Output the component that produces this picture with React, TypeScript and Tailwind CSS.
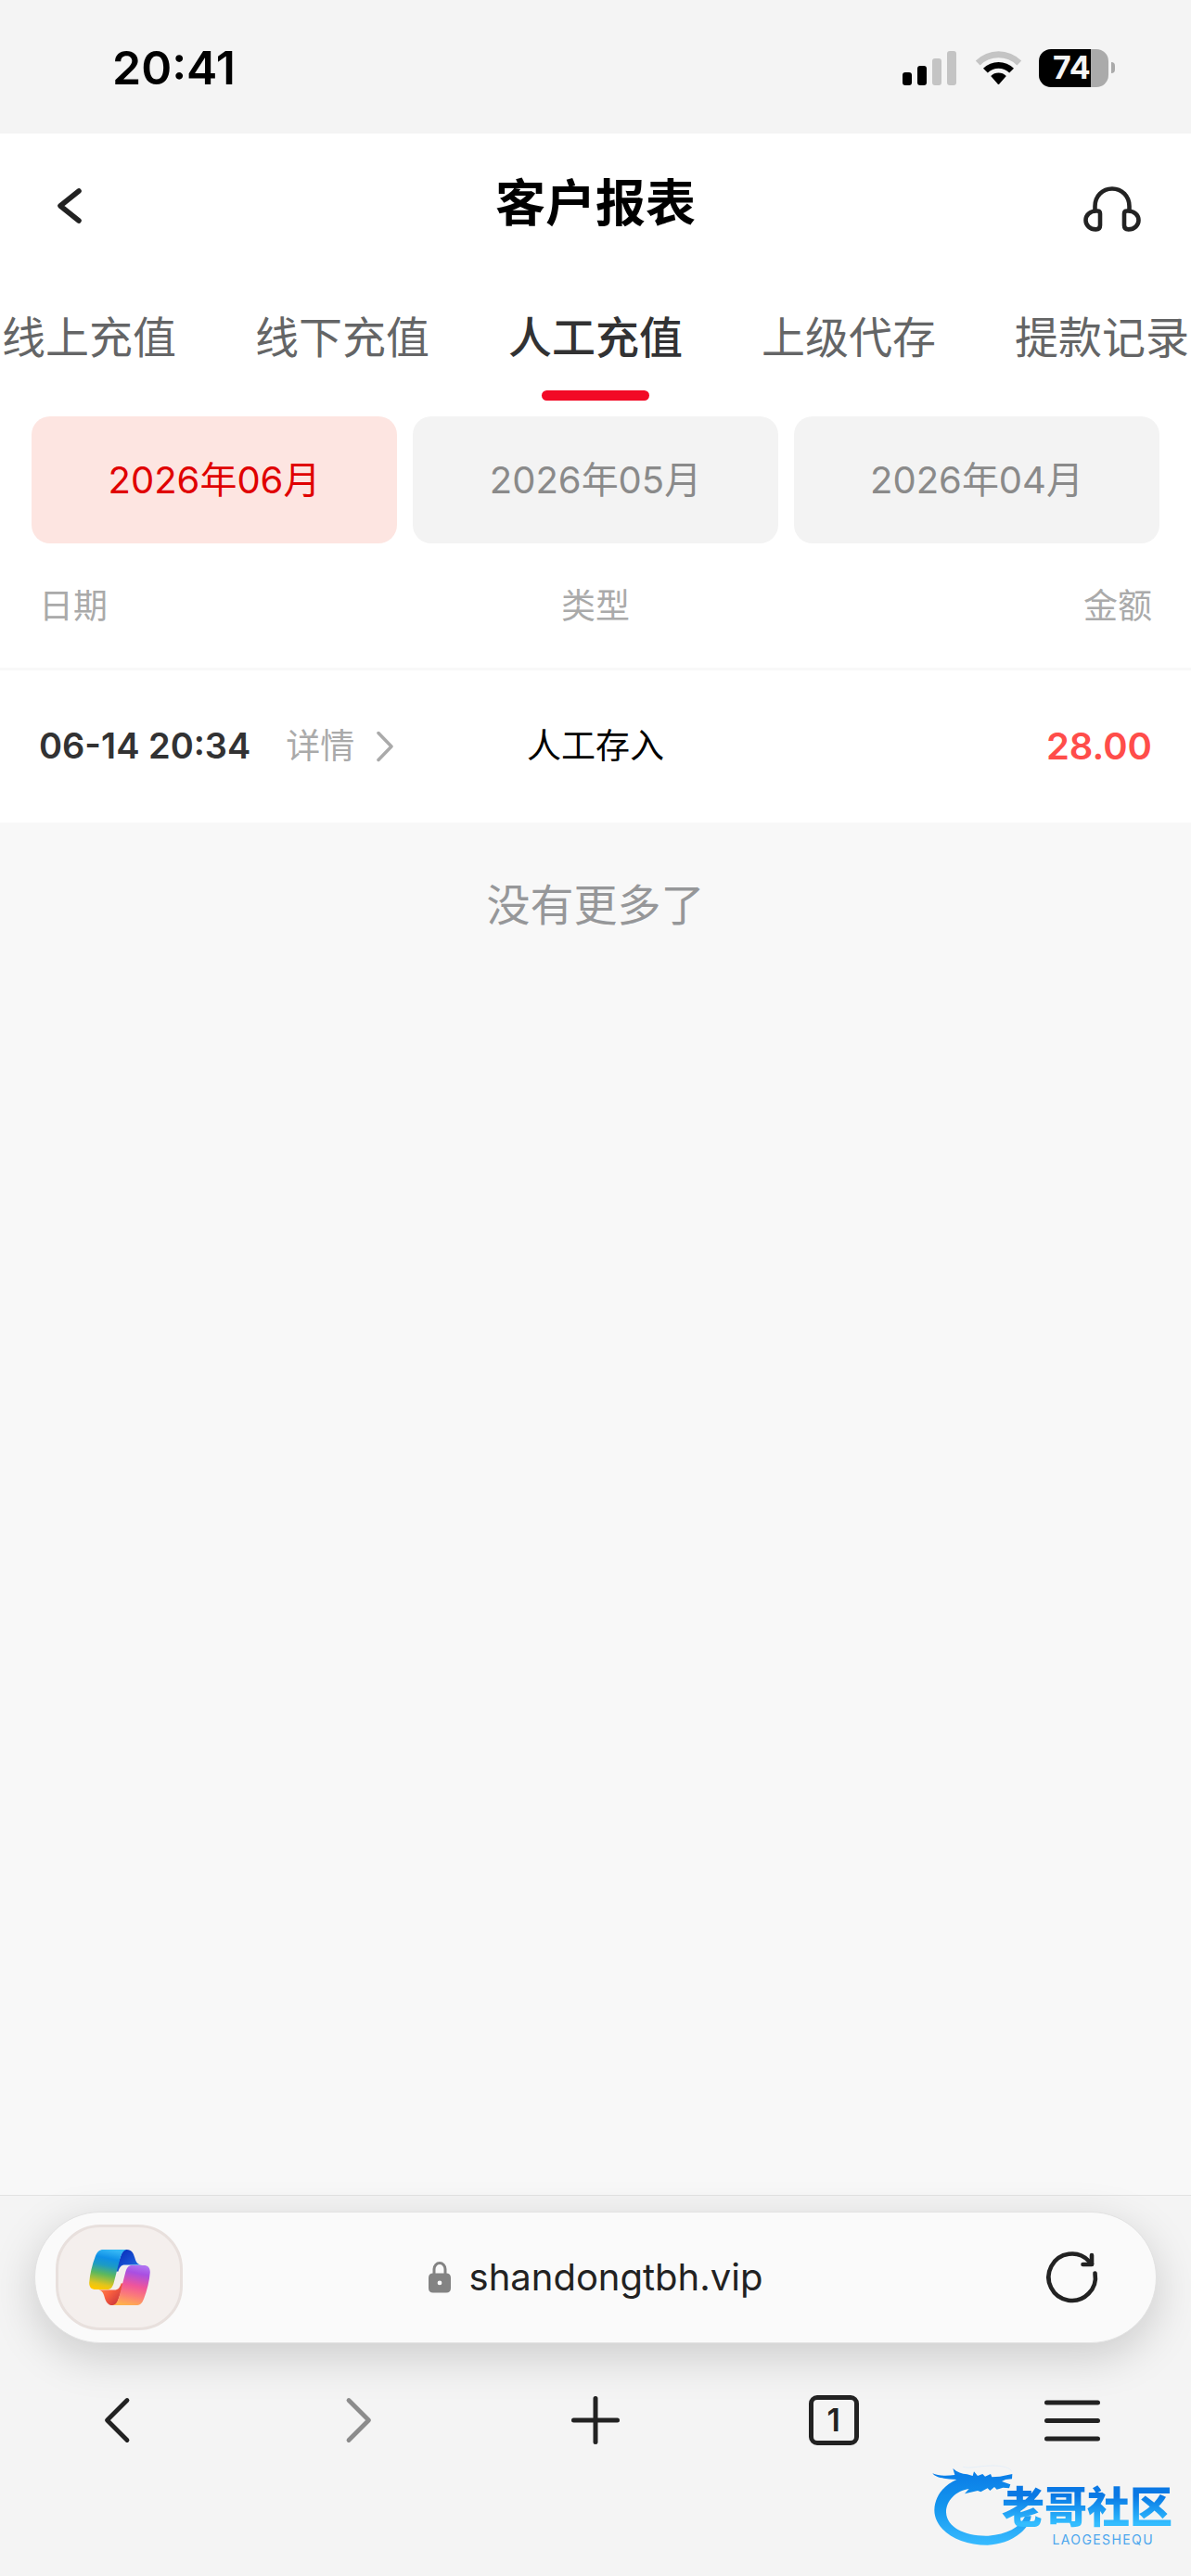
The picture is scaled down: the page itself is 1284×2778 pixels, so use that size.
import React, { useState } from "react";

const tabs = ["线上充值", "线下充值", "人工充值", "上级代存", "提款记录"];
const months = ["2026年06月", "2026年05月", "2026年04月"];
const records = [{ time: "06-14 20:34", type: "人工存入", amount: "28.00" }];

function StatusBar() {
  return (
    <div className="flex h-36 items-center justify-between bg-[#f4f4f4] pt-0.5 pr-[82px] pl-[121px]">
      <span className="text-[50px] font-semibold text-black">20:41</span>
      <div className="flex items-center gap-[18px]">
        {/* Signal */}
        <svg width="60" height="38" viewBox="0 0 60 38">
          <rect x="0" y="24" width="10" height="14" rx="3" />
          <rect x="16" y="17" width="10" height="21" rx="3" />
          <rect x="32" y="9" width="10" height="29" rx="3" fill="#c4c4c4" />
          <rect x="48" y="1" width="10" height="37" rx="3" fill="#c4c4c4" />
        </svg>
        {/* Wifi */}
        <svg width="51" height="38" viewBox="0 0 51 38">
          <path
            d="M0.8 11.5A35 35 0 0 1 50.2 11.5L45.4 16.4A28.3 28.3 0 0 0 5.6 16.4Z"
            fill="#c4c4c4"
          />
          <path d="M9 19.8A23.5 23.5 0 0 1 42 19.8L37.2 24.6A16.7 16.7 0 0 0 13.8 24.6Z" />
          <path d="M17.2 28A11.8 11.8 0 0 1 33.8 28L26.4 36.4Q25.5 37.4 24.6 36.4Z" />
        </svg>
        {/* Battery */}
        <div className="flex items-center gap-[3px]">
          <div className="flex h-[41px] w-[75px] items-center overflow-hidden rounded-[13px] bg-gradient-to-r from-black from-75% to-[#aaaaaa] to-75% pl-[15px] text-[34px] leading-none font-bold text-[#f4f4f4]">
            74
          </div>
          <div className="h-3 w-1 rounded-r-full bg-[#aaaaaa]" />
        </div>
      </div>
    </div>
  );
}

function PageHeader() {
  return (
    <header className="flex h-[146px] items-center justify-between px-[54px]">
      <button aria-label="返回" className="w-[62px] pt-3">
        <svg width="42" height="42" viewBox="0 0 42 42" fill="none" stroke="#222" strokeWidth="5.6" strokeLinecap="round" strokeLinejoin="round">
          <path d="M31 4L11 20L31 36" />
        </svg>
      </button>
      <h1 className="pt-1 text-[54px] font-bold text-black">客户报表</h1>
      <button aria-label="客服" className="w-[62px] pt-4">
        <svg width="62" height="49" viewBox="0 0 62 49" fill="none" stroke="#222" strokeWidth="4.6" strokeLinejoin="round">
          <path d="M12.5 26V21.5C12.5 10.5 20.5 2.5 31 2.5S49.5 10.5 49.5 21.5V26" />
          <path d="M14 26.5H15Q18 26.5 18 29.5V42Q18 46.4 13.5 46.4C7 46.4 2.5 42 2.5 36.5C2.5 31 7 26.5 14 26.5Z" />
          <path d="M48 26.5H47Q44 26.5 44 29.5V42Q44 46.4 48.5 46.4C55 46.4 59.5 42 59.5 36.5C59.5 31 55 26.5 48 26.5Z" />
        </svg>
      </button>
    </header>
  );
}

function RecordTable() {
  return (
    <table className="w-full table-fixed">
      <thead>
        <tr className="h-[135px] border-b-3 border-[#f8f8f8] align-top text-[37px] leading-[56px] text-[#aaaaaa]">
          <th className="w-1/3 pt-10 pl-[42px] text-left font-normal">日期</th>
          <th className="w-1/3 pt-10 text-center font-normal">类型</th>
          <th className="w-1/3 pt-10 pr-[42px] text-right font-normal">金额</th>
        </tr>
      </thead>
      <tbody>
        {records.map((record) => (
          <tr key={record.time} className="h-[166px]">
            <td className="pl-[42px]">
              <div className="flex items-center whitespace-nowrap">
                <span className="text-[38px] font-semibold text-[#323233]">{record.time}</span>
                <a href="#detail" className="ml-[38px] flex items-center gap-6 text-[37px] text-[#aaaaaa]">
                  详情
                  <svg width="18" height="34" viewBox="0 0 18 34" fill="none" stroke="#aaa" strokeWidth="3.5" strokeLinecap="round" strokeLinejoin="round">
                    <path d="M2 2.5L16 17L2 31.5" />
                  </svg>
                </a>
              </div>
            </td>
            <td className="text-center text-[37px] text-black">{record.type}</td>
            <td className="pr-[42px] text-right text-[40px] font-semibold text-[#ff4d4a]">{record.amount}</td>
          </tr>
        ))}
      </tbody>
    </table>
  );
}

function CopilotLogo() {
  return (
    <svg width="66" height="60" viewBox="0 0 198 181">
      <defs>
        <linearGradient id="cpBlue" x1="0.55" y1="0" x2="0.35" y2="1">
          <stop offset="0" stopColor="#35b8f5" />
          <stop offset="0.22" stopColor="#0f8fe6" />
          <stop offset="0.4" stopColor="#1d9bc4" />
          <stop offset="0.62" stopColor="#5cb85e" />
          <stop offset="0.88" stopColor="#e2c51c" />
          <stop offset="1" stopColor="#ffc800" />
        </linearGradient>
        <linearGradient id="cpNavy" x1="0" y1="0" x2="1" y2="1">
          <stop offset="0.2" stopColor="#0c35bf" />
          <stop offset="0.6" stopColor="#1a55d6" />
          <stop offset="1" stopColor="#1590ee" />
        </linearGradient>
        <linearGradient id="cpPink" x1="0.6" y1="0" x2="0.4" y2="1">
          <stop offset="0" stopColor="#b070f0" />
          <stop offset="0.18" stopColor="#a94fe2" />
          <stop offset="0.5" stopColor="#f0559a" />
          <stop offset="0.75" stopColor="#fb7d78" />
          <stop offset="1" stopColor="#ffb04e" />
        </linearGradient>
        <linearGradient id="cpRed" x1="0" y1="0" x2="1" y2="0.8">
          <stop offset="0" stopColor="#ff9a50" />
          <stop offset="0.5" stopColor="#f9603f" />
          <stop offset="1" stopColor="#c5303c" />
        </linearGradient>
      </defs>
      <path d="M110 0H122C138 0 144 12 148 26C152 42 158 50 172 50H116C104 50 98 58 94 72L85 70Z" fill="url(#cpNavy)" />
      <path d="M88 181H76C60 181 54 169 50 155C46 139 40 131 26 131H82C94 131 100 123 104 109L113 111Z" fill="url(#cpRed)" />
      <path d="M46 0H122C108 2 103 20 99 34L80 108C76 122 71 130 58 130H22C6 130 0 122 0 108C2 80 10 48 20 22C26 6 33 0 46 0Z" fill="url(#cpBlue)" />
      <path d="M152 181H76C90 179 95 161 99 147L118 73C122 59 127 51 140 51H176C192 51 198 59 198 73C196 101 188 133 178 159C172 175 165 181 152 181Z" fill="url(#cpPink)" />
    </svg>
  );
}

function AddressBar() {
  return (
    <div className="mx-[37px] flex h-[142px] items-center justify-between rounded-[71px] border border-[#e2e2e2] bg-[#fafafa] pr-[58px] pl-[22px] shadow-[0_14px_48px_rgba(0,0,0,0.17)]">
      <button
        aria-label="Copilot"
        className="flex h-[114px] w-[137px] items-center justify-center rounded-[48px] border-3 border-[#e8e0dd] bg-[#f4efed]"
      >
        <CopilotLogo />
      </button>
      <a href="#site" className="flex items-center gap-5 text-[40px] text-[#222222]">
        <svg width="24" height="34" viewBox="0 0 24 34">
          <path d="M6 14V8A6 6.5 0 0 1 18 8V14" fill="none" stroke="#838383" strokeWidth="3" />
          <path
            fillRule="evenodd"
            fill="#838383"
            d="M5 12.5H19Q24 12.5 24 17.5V28.5Q24 33.5 19 33.5H5Q0 33.5 0 28.5V17.5Q0 12.5 5 12.5ZM12 20.5A2.4 2.4 0 1 0 12 25.3A2.4 2.4 0 1 0 12 20.5Z"
          />
        </svg>
        shandongtbh.vip
      </a>
      <button aria-label="刷新" className="flex w-[101px] justify-end">
        <svg width="64" height="64" viewBox="0 0 64 64" fill="none" stroke="#222" strokeWidth="4.6" strokeLinecap="round" strokeLinejoin="round">
          <path d="M56.5 27.5A25.2 25.2 0 1 1 50 14.5L53 17.5" />
          <path d="M53 8V18H43.5" />
        </svg>
      </button>
    </div>
  );
}

function BrowserNav() {
  return (
    <nav className="grid h-24 grid-cols-5 place-items-center text-[#222222]">
      <button aria-label="后退">
        <svg width="60" height="60" viewBox="0 0 60 60" fill="none" stroke="currentColor" strokeWidth="4.8" strokeLinecap="round" strokeLinejoin="round">
          <path d="M39 8.5L17.5 30L39 51.5" />
        </svg>
      </button>
      <button aria-label="前进" className="text-[#8c8c8c]">
        <svg width="60" height="60" viewBox="0 0 60 60" fill="none" stroke="currentColor" strokeWidth="4.8" strokeLinecap="round" strokeLinejoin="round">
          <path d="M21 8.5L42.5 30L21 51.5" />
        </svg>
      </button>
      <button aria-label="新建标签页">
        <svg width="60" height="60" viewBox="0 0 60 60" fill="none" stroke="currentColor" strokeWidth="5" strokeLinecap="round">
          <path d="M6.5 30H53.5M30 6.5V53.5" />
        </svg>
      </button>
      <button
        aria-label="标签页"
        className="flex h-[54px] w-[54px] items-center justify-center rounded-[9px] border-5 border-[#222222] text-[34px] leading-none font-semibold"
      >
        1
      </button>
      <button aria-label="菜单">
        <svg width="60" height="60" viewBox="0 0 60 60" fill="none" stroke="currentColor" strokeWidth="5" strokeLinecap="round">
          <path d="M2.5 11H57.5M2.5 30.5H57.5M2.5 50H57.5" />
        </svg>
      </button>
    </nav>
  );
}

function Watermark() {
  return (
    <div className="pointer-events-none absolute right-5 bottom-8 flex items-start">
      <svg width="108" height="88" viewBox="0 0 324 264">
        <defs>
          <linearGradient id="dragon" x1="0" y1="0" x2="0" y2="1">
            <stop offset="0.1" stopColor="#0b7fe8" />
            <stop offset="0.5" stopColor="#1496ee" />
            <stop offset="1" stopColor="#38bbff" />
          </linearGradient>
        </defs>
        <path
          fill="url(#dragon)"
          d="M4 28C22 36 48 37 76 33L70 12C84 24 98 30 116 31L134 36L138 22L150 36L166 30L174 38L192 30L196 40L222 38L244 34L262 30L261 46L240 48L228 54L256 64L252 76L232 74L212 80L204 72L190 84L182 76L160 88L150 84L108 94L122 78C80 84 48 116 48 154C50 204 110 232 184 230C244 226 286 204 304 166L323 166C320 190 306 206 290 220C256 248 220 258 182 260C84 260 10 210 10 146C12 102 40 66 82 48C52 46 14 44 4 28Z"
        />
        <path d="M102 6C120 14 140 6 176 4C220 0 256 8 260 22" fill="none" stroke="#dcebfa" strokeWidth="2" />
      </svg>
      <div className="-ml-[32px] flex flex-col items-end gap-1.5 pt-[22px]">
        <span className="bg-gradient-to-b from-[#0a78e4] from-25% to-[#33bdff] to-90% bg-clip-text text-[46px] leading-[46px] font-black text-transparent">
          老哥社区
        </span>
        <span className="pr-5 text-[14px] leading-[14px] tracking-widest text-[#4ba6ee]">LAOGESHEQU</span>
      </div>
    </div>
  );
}

export default function App() {
  const [activeTab, setActiveTab] = useState(2);
  const [activeMonth, setActiveMonth] = useState(0);

  return (
    <div className="relative flex min-h-screen flex-col overflow-x-hidden bg-[#f8f8f8] font-['Inter','Noto_Sans_CJK_SC',sans-serif]">
      <StatusBar />

      <main className="flex-1">
        <section className="bg-white">
          <PageHeader />

          {/* Tabs */}
          <div className="flex justify-center overflow-hidden">
            {tabs.map((tab, index) => (
              <button
                key={tab}
                onClick={() => setActiveTab(index)}
                className={`flex h-[142px] w-[273px] shrink-0 flex-col items-center justify-between pt-[39px] text-[47px] leading-[70px] ${
                  index === activeTab ? "font-medium text-[#323233]" : "text-[#646566]"
                }`}
              >
                {tab}
                {index === activeTab && <span className="h-[11px] w-[116px] rounded-full bg-[#f20a26]" />}
              </button>
            ))}
          </div>

          {/* Months */}
          <div className="grid grid-cols-3 gap-[17px] px-[34px] pt-[17px]">
            {months.map((month, index) => (
              <button
                key={month}
                onClick={() => setActiveMonth(index)}
                className={`h-[137px] rounded-[20px] text-[40px] ${
                  index === activeMonth ? "bg-[#fde5e1] text-[#e00000]" : "bg-[#f3f3f3] text-[#8a8a8a]"
                }`}
              >
                {month}
              </button>
            ))}
          </div>

          <RecordTable />
        </section>

        <p className="pt-[54px] text-center text-[47px] leading-[70px] text-[#969799]">没有更多了</p>
      </main>

      <footer className="border-t border-[#e2e2e2] bg-[#f4f4f4] pt-[17px] pb-[120px]">
        <AddressBar />
        <div className="pt-[35px]">
          <BrowserNav />
        </div>
      </footer>

      <Watermark />
    </div>
  );
}
